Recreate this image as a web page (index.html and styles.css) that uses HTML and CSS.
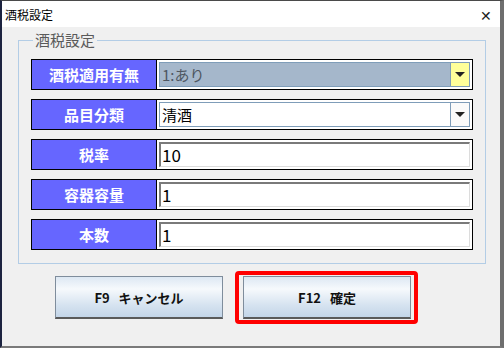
FILE: index.html
```html
<!DOCTYPE html>
<html>
<head>
    <title>酒税設定</title>
    <link rel="stylesheet" href="styles.css">
</head>
<body>
    <div class="window">
        <div class="title-bar">
            <span class="title">酒税設定</span>
            <span class="close-btn">&#x2715;</span>
        </div>
        <div class="content">
            <fieldset class="group">
                <legend>酒税設定</legend>
                <div class="row">
                    <div class="label">酒税適用有無</div>
                    <div class="field">
                        <div class="combo combo-disabled">
                            <span class="combo-text">1:あり</span>
                            <span class="combo-btn combo-btn-yellow"><i class="arrow"></i></span>
                        </div>
                    </div>
                </div>
                <div class="row">
                    <div class="label">品目分類</div>
                    <div class="field">
                        <div class="combo">
                            <span class="combo-text">清酒</span>
                            <span class="combo-btn"><i class="arrow"></i></span>
                        </div>
                    </div>
                </div>
                <div class="row">
                    <div class="label">税率</div>
                    <div class="field">
                        <div class="textbox">10</div>
                    </div>
                </div>
                <div class="row">
                    <div class="label">容器容量</div>
                    <div class="field">
                        <div class="textbox">1</div>
                    </div>
                </div>
                <div class="row">
                    <div class="label">本数</div>
                    <div class="field">
                        <div class="textbox">1</div>
                    </div>
                </div>
            </fieldset>
            <div class="buttons">
                <button class="btn btn-cancel">F9&nbsp;&nbsp;&nbsp;キャンセル</button>
                <div class="highlight">
                    <button class="btn">F12&nbsp;&nbsp;&nbsp;確定</button>
                </div>
            </div>
        </div>
    </div>
</body>
</html>
```

FILE: styles.css
```css
body {
    margin: 0;
    padding: 0;
    background-color: #1c2340;
    font-family: "Noto Sans CJK JP", "Noto Sans", sans-serif;
}

.window {
    box-sizing: border-box;
    width: 504px;
    height: 348px;
    border-left: 2px solid #1c2340;
    border-top: 1px solid #4a4a4a;
    border-right: 4px solid #6e6e6e;
    border-bottom: 2px solid #7a7a7a;
    background-color: #f0f0f0;
    display: flex;
    flex-direction: column;
}

.title-bar {
    height: 26px;
    background-color: #fff;
    display: flex;
    align-items: center;
    justify-content: space-between;
    padding: 0 8px 0 3px;
}

.title {
    font-size: 12px;
    color: #000;
}

.close-btn {
    font-size: 14px;
    font-weight: 300;
    color: #222;
    margin-top: 1px;
}

.content {
    flex: 1;
    padding: 5px 0 0 16px;
}

.group {
    box-sizing: border-box;
    width: 468px;
    height: 232px;
    margin: 0;
    padding: 11px 0 0 12px;
    border: 1px solid #b3cde6;
}

.group legend {
    font-size: 15px;
    line-height: 16px;
    color: #5a5a5a;
    padding: 0 2px;
    margin-left: 2px;
}

.row {
    box-sizing: border-box;
    display: flex;
    width: 442px;
    height: 31px;
    margin-bottom: 9px;
    border: 1px solid #000;
    background-color: #fff;
}

.label {
    width: 124px;
    background-color: #6666ff;
    border-right: 1px solid #000;
    color: #fff;
    font-weight: bold;
    font-size: 15px;
    display: flex;
    align-items: center;
    justify-content: center;
}

.field {
    flex: 1;
    padding: 2px;
    display: flex;
}

.combo {
    flex: 1;
    display: flex;
    border: 1px solid #7f9db9;
    background-color: #fff;
}

.combo-disabled {
    background-color: #a5b7cb;
}

.combo-text {
    flex: 1;
    font-size: 15px;
    line-height: 24px;
    padding-left: 2px;
    color: #000;
}

.combo-disabled .combo-text {
    color: #4e5661;
}

.combo-btn {
    width: 18px;
    border-left: 1px solid #7f9db9;
    background-color: #fafafa;
    display: flex;
    align-items: center;
    justify-content: center;
}

.combo-btn-yellow {
    background-color: #ffff99;
}

.arrow {
    width: 0;
    height: 0;
    border-left: 5px solid transparent;
    border-right: 5px solid transparent;
    border-top: 5px solid #222;
}

.textbox {
    flex: 1;
    border-top: 2px solid #7a7a7a;
    border-left: 2px solid #7a7a7a;
    border-right: 1px solid #dcdcdc;
    border-bottom: 1px solid #dcdcdc;
    background-color: #fff;
    font-size: 17px;
    line-height: 22px;
    padding-left: 1px;
    color: #000;
}

.buttons {
    display: flex;
    align-items: center;
    padding: 7px 0 0 37px;
}

.btn {
    box-sizing: border-box;
    width: 168px;
    height: 43px;
    border: 1px solid #7f8d9c;
    border-bottom: 2px solid #5a5a5a;
    background: linear-gradient(to bottom, #dde8f3 0%, #f6f9fc 30%, #d6e3f0 70%, #c3d5e8 100%);
    font-family: "Noto Sans CJK JP", sans-serif;
    font-size: 13px;
    font-weight: bold;
    color: #111;
    padding: 0;
}

.btn-cancel {
    margin-right: 12px;
}

.highlight {
    border: 4px solid #ff0000;
    border-radius: 4px;
    padding: 1px 3px 1px 4px;
}
```
